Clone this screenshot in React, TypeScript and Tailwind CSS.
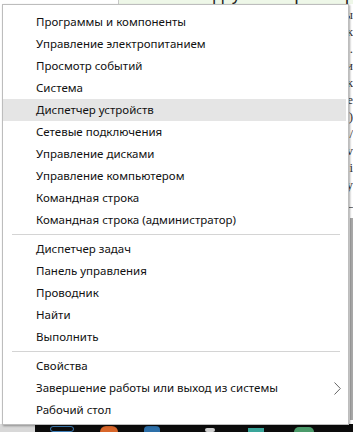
type Entry = { label: string; active?: boolean; sub?: boolean } | 'sep';

const entries: Entry[] = [
  { label: 'Программы и компоненты' },
  { label: 'Управление электропитанием' },
  { label: 'Просмотр событий' },
  { label: 'Система' },
  { label: 'Диспетчер устройств', active: true },
  { label: 'Сетевые подключения' },
  { label: 'Управление дисками' },
  { label: 'Управление компьютером' },
  { label: 'Командная строка' },
  { label: 'Командная строка (администратор)' },
  'sep',
  { label: 'Диспетчер задач' },
  { label: 'Панель управления' },
  { label: 'Проводник' },
  { label: 'Найти' },
  { label: 'Выполнить' },
  'sep',
  { label: 'Свойства' },
  { label: 'Завершение работы или выход из системы', sub: true },
  { label: 'Рабочий стол' },
];

// text of the article page peeking out on the right edge
const pageLines = ['ры', 'к', '.', 'и', 'Ск', 'е', 'о)', '/', 'v', 'i', 'у', '_'];

export default function App() {
  return (
    <div className="relative w-[353px] h-[432px] overflow-hidden bg-white flex flex-col font-['Noto_Sans',sans-serif]">
      {/* page behind the menu */}
      <div className="flex-1 flex flex-col">
        <div className="flex h-[4px] overflow-visible">
          <div className="w-[118px] shrink-0" />
          <div className="flex-1 border-l border-[#c8c8c8] bg-[#eef7e8] overflow-hidden relative">
            <div className="absolute left-[56px] bottom-[1px] text-[18px] leading-none text-[#222] font-['Liberation_Sans',sans-serif] whitespace-nowrap">
              вкладку «Контроллеры
            </div>
          </div>
        </div>
        <div className="flex-1 flex justify-end">
          <div className="w-[40px] flex flex-col text-right text-[13px] leading-[17px] text-[#333] pt-[2px] overflow-hidden font-['Liberation_Serif',serif] mr-[-3px]">
            {pageLines.map((l, i) => (
              <span key={i}>{l}</span>
            ))}
          </div>
          <div className="w-[3px] mt-[214px] mb-[4px] bg-[#a8a8a8]" />
        </div>
      </div>

      {/* taskbar */}
      <div className="h-[8px] bg-[#0c0c0c] flex items-start">
        <div className="w-[35px] h-full bg-[#d8d8d8]" />
        <div className="ml-[15px] w-[24px] h-[6px] rounded-full border border-[#3f7fb8] mt-[2px]" />
        <div className="ml-[26px] w-[18px] h-[6px] rounded-t-full bg-[#d8662a] mt-[2px]" />
        <div className="ml-[26px] w-[16px] h-[6px] rounded-t-sm bg-[#2d6fa8] mt-[2px]" />
        <div className="ml-[45px] w-[10px] h-[4px] rounded-full bg-[#cfcfcf] mt-[4px]" />
        <div className="ml-[33px] w-[16px] h-[4px] bg-[#3aa59a] mt-[4px]" />
        <div className="ml-[30px] w-[20px] h-[5px] rounded-t-full bg-[#4b9a6a] mt-[3px]" />
      </div>

      {/* Win+X menu */}
      <div className="absolute left-[2px] top-[4px] w-[347px] h-[421px] bg-white border border-[#bdbdbd] shadow-[1px_1px_2px_rgba(0,0,0,0.35)] pt-[6px] pb-[3px] pr-[2px] flex flex-col">
        {entries.map((e, i) =>
          e === 'sep' ? (
            <div key={i} className="h-[7px] flex items-center pl-[9px] pr-[6px]">
              <div className="h-px w-full bg-[#d4d4d4]" />
            </div>
          ) : (
            <div
              key={i}
              className={`h-[22px] shrink-0 flex items-center pl-[33px] pr-[5px] text-[11.5px] text-[#111] ${e.active ? 'bg-[#e5e5e5]' : ''}`}
            >
              <span className="flex-1 whitespace-nowrap">{e.label}</span>
              {e.sub && (
                <svg width="7" height="13" viewBox="0 0 7 13" className="text-[#666]">
                  <polyline points="0.5,0.5 6.3,6.5 0.5,12.5" fill="none" stroke="currentColor" strokeWidth="1" />
                </svg>
              )}
            </div>
          )
        )}
      </div>
    </div>
  );
}
